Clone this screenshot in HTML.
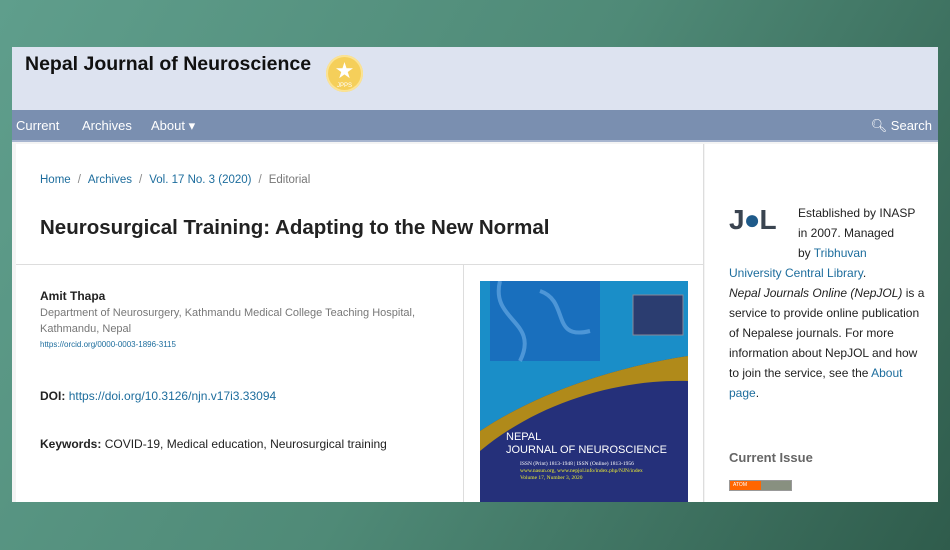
<!DOCTYPE html>
<html><head><meta charset="utf-8"><style>
*{margin:0;padding:0;box-sizing:border-box}
body{width:950px;height:550px;overflow:hidden;position:relative;font-family:"Liberation Sans",sans-serif;background:linear-gradient(120deg,#5f9e8c 0%,#4f8a77 50%,#2f5c4c 100%)}
.page{position:absolute;left:12px;top:47px;width:926px;height:455px;background:#f4f4f4;overflow:hidden}
.hdr{position:absolute;left:0;top:0;width:926px;height:63px;background:#dde3f0}
.hdr h1{position:absolute;left:13px;top:6px;font-size:19.5px;font-weight:bold;color:#111}
.badge{position:absolute;left:314px;top:8px;width:37px;height:37px;border-radius:50%;background:#f5cf5a;box-shadow:0 0 0 2px #fbe394 inset}
.badge span{position:absolute;left:0;width:37px;top:3px;text-align:center;color:#fff;font-size:22px}
.badge i{position:absolute;left:0;width:37px;bottom:3px;text-align:center;color:#fff;font-size:6px;font-style:normal}
.nav{position:absolute;left:0;top:63px;width:926px;height:32px;background:#7a8fb0;border-bottom:2px solid #a7b5cf;color:#fff;font-size:13px}
.nav span{position:absolute;top:8px}
.main{position:absolute;left:4px;top:97px;width:688px;height:358px;background:#fff;border-right:1px solid #ddd}
.side{position:absolute;left:693px;top:97px;width:233px;height:358px;background:#fff}
.bc{position:absolute;left:24px;top:30px;font-size:11.5px;color:#777}
.bc a{color:#1d6d9d;text-decoration:none}
.bc s{text-decoration:none;color:#888;margin:0 7px}
.ttl{position:absolute;left:24px;top:72px;font-size:20.5px;font-weight:bold;color:#222}
.hr{position:absolute;left:0;top:120px;width:688px;height:1px;background:#ddd}
.vr{position:absolute;left:447px;top:121px;width:1px;height:240px;background:#ddd}
.a{position:absolute;left:24px;color:#222}
a{color:#1d6d9d}
.cover{position:absolute;left:464px;top:137px;width:208px;height:224px;background:#25307a;overflow:hidden}
.sd{position:absolute;left:24px;font-size:12px;color:#222;line-height:20px;white-space:nowrap}
</style></head><body>
<div class="page">
<div class="hdr"><h1>Nepal Journal of Neuroscience</h1><div class="badge"><span>★</span><i>JPPS</i></div></div>
<div class="nav"><span style="left:4px">Current</span><span style="left:70px">Archives</span><span style="left:139px">About ▾</span><span style="right:6px">&#x1F50D;&#xFE0E; Search</span></div>
<div class="main">
<div class="bc"><a>Home</a><s>/</s><a>Archives</a><s>/</s><a>Vol. 17 No. 3 (2020)</a><s>/</s>Editorial</div>
<div class="ttl">Neurosurgical Training: Adapting to the New Normal</div>
<div class="hr"></div><div class="vr"></div>
<div class="a" style="top:145px;font-size:12px;font-weight:bold">Amit Thapa</div>
<div class="a" style="top:161px;font-size:11px;color:#777;line-height:16px">Department of Neurosurgery, Kathmandu Medical College Teaching Hospital,<br>Kathmandu, Nepal</div>
<div class="a" style="top:196px;font-size:8px"><a>https://orcid.org/0000-0003-1896-3115</a></div>
<div class="a" style="top:245px;font-size:12px"><b>DOI:</b> <a>https://doi.org/10.3126/njn.v17i3.33094</a></div>
<div class="a" style="top:293px;font-size:12px"><b>Keywords:</b> COVID-19, Medical education, Neurosurgical training</div>
<div class="cover">
<svg width="208" height="224" viewBox="0 0 208 224" style="position:absolute;left:0;top:0">
<rect width="208" height="224" fill="#25307a"/>
<path d="M0 0H208V75C140 85 60 110 0 150Z" fill="#1a8ec8"/>
<rect x="10" y="0" width="110" height="80" fill="#1a62b8" opacity=".7"/>
<path d="M0 150C60 110 140 85 208 75V100C140 98 60 120 0 170Z" fill="#b08a1a"/>
<path d="M20 0C10 40 60 40 40 80M60 10C90 20 70 60 110 50" stroke="#6fb0e8" stroke-width="4" fill="none" opacity=".6"/>
<rect x="153" y="14" width="50" height="40" fill="#2b3d70" stroke="#889"/>
</svg>
<div style="position:absolute;left:26px;top:150px;color:#fff;font-size:11px;line-height:13px">NEPAL<br>JOURNAL OF NEUROSCIENCE</div>
<div style="position:absolute;left:40px;top:180px;color:#fff;font-size:5.5px;line-height:7px;font-family:'Liberation Serif',serif">ISSN (Print) 1813-1948 | ISSN (Online) 1813-1956<br><span style="color:#ee3">www.nasun.org, www.nepjol.info/index.php/NJN/index<br>Volume 17, Number 3, 2020</span></div>
</div>
</div>
<div class="side">
<div style="position:absolute;left:24px;top:60px;font-size:28px;font-weight:bold;color:#3a4450;letter-spacing:-1px">J<span style="color:#1e5a8a">●</span>L</div>
<div class="sd" style="left:93px;top:59px">Established by INASP<br>in 2007. Managed<br>by <a style="text-decoration:none">Tribhuvan</a></div>
<div class="sd" style="top:119px"><a style="text-decoration:none">University Central Library</a>.<br><i>Nepal Journals Online (NepJOL)</i> is a<br>service to provide online publication<br>of Nepalese journals. For more<br>information about NepJOL and how<br>to join the service, see the <a style="text-decoration:none">About</a><br><a style="text-decoration:none">page</a>.</div>
<div class="sd" style="top:304px;font-size:13px;font-weight:bold;color:#666">Current Issue</div>
<div style="position:absolute;left:24px;top:336px;width:63px;height:11px;border:1px solid #999;background:#889080"><div style="width:31px;height:9px;background:#f60;color:#fff;font-size:5px;padding-left:3px;line-height:9px">ATOM</div></div>
</div>
</div>
</body></html>
